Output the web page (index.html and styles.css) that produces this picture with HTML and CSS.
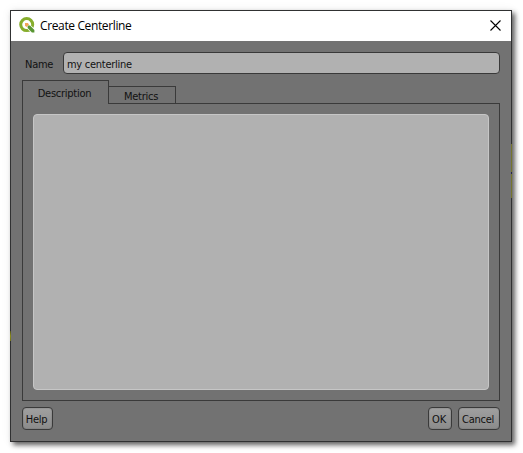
FILE: index.html
```html
<!DOCTYPE html>
<html lang="en">
<head>
<meta charset="utf-8">
<title>Create Centerline</title>
<link rel="stylesheet" href="styles.css">
</head>
<body>
<div class="dialog">
  <header class="titlebar">
    <svg class="logo" viewBox="0 0 16 16" width="16" height="16">
      <circle cx="7.7" cy="7.6" r="6" fill="none" stroke="#86ad2c" stroke-width="3"/>
      <path d="M8 8 16 16" stroke="#fff" stroke-width="5"/>
      <path d="M8.6 8.4H11L15.4 12.9V15.4H12.9L8.6 11Z" fill="#589632"/>
      <path d="M6 6H8.8L10 7.4 7.5 9.9 6 8.7Z" fill="#f2a556"/>
    </svg>
    <span class="title">Create Centerline</span>
    <svg class="close" viewBox="0 0 11 11" width="11" height="11"><path d="M.5.5 10.5 10.5M10.5.5.5 10.5" stroke="#000" stroke-width="1.1"/></svg>
  </header>
  <main class="content">
    <div class="name-row"><label class="name-label">Name</label><div class="field">my centerline</div></div>
    <div class="tabs">
      <div class="tab active">Description</div>
      <div class="tab">Metrics</div>
    </div>
    <div class="pane"><div class="editor"></div></div>
    <footer class="buttons">
      <div class="button help">Help</div>
      <div class="button ok">OK</div>
      <div class="button cancel">Cancel</div>
    </footer>
  </main>
  <i class="edge-right"></i>
  <i class="edge-left"></i>
</div>
</body>
</html>
```
FILE: styles.css
```css
* { box-sizing: border-box; }
body {
  margin: 0;
  padding: 10px;
  height: 453px;
  overflow: hidden;
  background: #fff;
  color: #111;
  font: 11px/14px "DejaVu Sans Condensed", "Noto Sans", sans-serif;
}
.dialog {
  position: relative;
  display: flex;
  flex-direction: column;
  width: 502px;
  height: 432px;
  border: 1px solid #303132;
  background: #727272;
  box-shadow: 3px 3px 5px rgba(0, 0, 0, .62), 0 0 10px rgba(0, 0, 0, .06);
}
.titlebar {
  display: flex;
  align-items: center;
  height: 30px;
  padding: 0 10px 0 8px;
  background: #fff;
}
.logo { margin-top: -2px; }
.title {
  margin-left: 5px;
  color: #000;
  font: 12px/16px "Open Sans", sans-serif;
  letter-spacing: -.37px;
  white-space: nowrap;
}
.close { margin-left: auto; margin-top: -2px; }
.content { flex: 1; padding: 11px; }
.name-row { display: flex; height: 22px; align-items: center; letter-spacing: -.27px; }
.name-label { width: 41px; padding: 3px 0 0 3px; }
.field {
  flex: 1;
  height: 22px;
  padding: 5px 0 0 3px;
  border: 1px solid #393939;
  border-radius: 4px;
  background: #b1b1b1;
}
.tabs { display: flex; align-items: flex-end; height: 24px; margin-top: 6px; letter-spacing: -.25px; }
.tab {
  width: 67px;
  height: 18px;
  padding: 3px 2px 0 0;
  border: 1px solid #3a3a3a;
  border-left: 0;
  text-align: center;
}
.tab.active {
  position: relative;
  z-index: 1;
  width: 87px;
  height: 24px;
  padding-top: 6px;
  border-left: 1px solid #3a3a3a;
  border-bottom: 0;
  background: #727272;
}
.pane {
  height: 298px;
  margin-top: -1px;
  padding: 10px;
  border: 1px solid #3a3a3a;
}
.editor {
  height: 276px;
  border: 1px solid #c6c6c6;
  border-radius: 4px;
  background: #b1b1b1;
}
.buttons { display: flex; height: 23px; margin-top: 6px; }
.button {
  display: flex;
  align-items: center;
  justify-content: center;
  padding: 2px 2px 0 0;
  border: 1px solid #3a3a3a;
  border-radius: 4px;
  background: linear-gradient(#a0a0a0, #8b8b8b);
  box-shadow: inset 0 0 0 1px rgba(40, 40, 40, .08);
  letter-spacing: -.25px;
}
.help { width: 31px; margin-right: auto; }
.ok { width: 24px; margin-right: 6px; }
.cancel { width: 42px; }
.edge-right, .edge-left { position: absolute; width: 1px; }
.edge-right {
  right: -1px;
  top: 133px;
  height: 54px;
  background: linear-gradient(#74742d 0 28px, #242449 28px 30px, #74742d 30px);
}
.edge-left {
  left: -1px;
  top: 320px;
  height: 10px;
  background: linear-gradient(#51511f, #8b8b18, #71711a);
}
```
